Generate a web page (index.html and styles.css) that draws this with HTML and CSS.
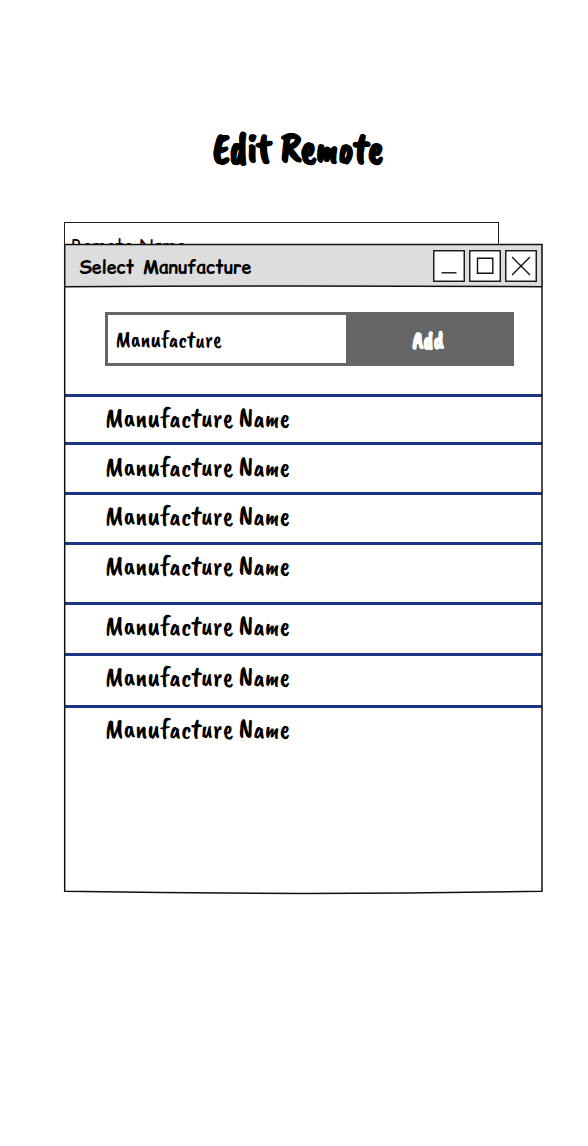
FILE: index.html
```
<!DOCTYPE html>
<html lang="en">
<head>
<meta charset="utf-8">
<title>Edit Remote</title>
<link rel="stylesheet" href="styles.css">
</head>
<body>
<main class="screen">
  <h1 class="title"><svg class="lettering" width="172" height="44"><text x="1" y="35.5" textLength="170.5" lengthAdjust="spacingAndGlyphs">Edit Remote</text></svg></h1>
  <div class="remote-field"><svg class="lettering" width="130" height="30"><text x="-1" y="20" textLength="115" lengthAdjust="spacingAndGlyphs">Remote Name</text></svg></div>
  <section class="window">
    <header class="titlebar">
      <svg class="lettering caption" width="180" height="30"><text x=".5" y="22.5" textLength="172" lengthAdjust="spacingAndGlyphs">Select Manufacture</text></svg>
      <div class="controls">
        <svg class="control" viewBox="0 0 32 32"><rect class="box" x=".75" y=".75" width="30.5" height="30.5"/><path d="M8.5 22.8H23.5"/></svg>
        <svg class="control" viewBox="0 0 32 32"><rect class="box" x=".75" y=".75" width="30.5" height="30.5"/><path d="M8.5 8.3H23.8V23.3H8.5Z"/></svg>
        <svg class="control" viewBox="0 0 32 32"><rect class="box" x=".75" y=".75" width="30.5" height="30.5"/><path d="M7 7L25 25M25 7L7 25"/></svg>
      </div>
    </header>
    <div class="form">
      <div class="input"><svg class="lettering" width="120" height="30"><text x="-.5" y="21" textLength="106" lengthAdjust="spacingAndGlyphs">Manufacture</text></svg></div>
      <div class="add"><svg class="lettering" width="32" height="30"><text x="0.5" y="21.5" textLength="31" lengthAdjust="spacingAndGlyphs">Add</text></svg></div>
    </div>
    <div class="list">
      <div class="row r1"><svg class="lettering" width="190" height="36"><text x="-1" y="26" textLength="185" lengthAdjust="spacingAndGlyphs">Manufacture Name</text></svg></div>
      <div class="row r2"><svg class="lettering" width="190" height="36"><text x="-1" y="26" textLength="185" lengthAdjust="spacingAndGlyphs">Manufacture Name</text></svg></div>
      <div class="row r3"><svg class="lettering" width="190" height="36"><text x="-1" y="26" textLength="185" lengthAdjust="spacingAndGlyphs">Manufacture Name</text></svg></div>
      <div class="row r4"><svg class="lettering" width="190" height="36"><text x="-1" y="26" textLength="185" lengthAdjust="spacingAndGlyphs">Manufacture Name</text></svg></div>
      <div class="row r5"><svg class="lettering" width="190" height="36"><text x="-1" y="26" textLength="185" lengthAdjust="spacingAndGlyphs">Manufacture Name</text></svg></div>
      <div class="row r6"><svg class="lettering" width="190" height="36"><text x="-1" y="26" textLength="185" lengthAdjust="spacingAndGlyphs">Manufacture Name</text></svg></div>
      <div class="row r7"><svg class="lettering" width="190" height="36"><text x="-1" y="26" textLength="185" lengthAdjust="spacingAndGlyphs">Manufacture Name</text></svg></div>
    </div>
    <svg class="frame" width="480" height="652" viewBox="0 0 480 652"><path d="M.7 .5H478V647.3Q239 651.5 .7 647.3Z"/><path d="M.7 42.8Q239 41 478 42.8"/></svg>
  </section>
</main>
</body>
</html>
```
FILE: styles.css
```
* { box-sizing: border-box; }
body { margin: 0; background: #fff; font-family: "Caveat Brush", Caveat, Lato, sans-serif; color: #000; }
.screen { height: 1146px; padding: 126px 0 0 64px; overflow: hidden; }
.lettering { display: block; flex: none; overflow: visible; fill: currentColor; }
.title { margin: 0; height: 96px; padding-left: 148px; font-size: 42px; font-weight: 700; }
.title .lettering { stroke: #000; stroke-width: .6; stroke-linejoin: round; }
.remote-field { width: 435px; height: 22px; padding: 10px 0 0 7px; border: 1.5px solid #222; border-bottom: 0; font-family: "Comic Sans MS", "Comic Relief", "Comic Neue", "Patrick Hand", Lato, sans-serif; font-size: 18px; }
.window { position: relative; width: 479px; height: 648px; background: #fff; }
.titlebar { display: flex; align-items: center; justify-content: space-between; height: 43px; padding: 0 6px 0 15px; background: #ddd; font-family: "Comic Sans MS", "Comic Relief", "Comic Neue", "Patrick Hand", Lato, sans-serif; font-size: 18.7px; font-weight: 700; word-spacing: 1px; }
.controls { display: flex; gap: 4px; }
.control { display: block; width: 32px; height: 32px; fill: none; stroke: #111; stroke-width: 1.4; }
.control .box { fill: #fff; }
.form { display: flex; width: 409px; height: 54px; margin: 25px 0 0 41px; background: #666; }
.input { width: 241px; padding: 11px 0 0 8px; border: 3px solid #666; border-right: 0; background: #fff; font-size: 23.5px; font-weight: 400; }
.add { flex: 1; padding: 14px 0 0 66px; color: #fff; font-size: 24px; font-weight: 700; }
.add .lettering { stroke: #fff; stroke-width: .4; }
.list { margin: 28px 1px 0; }
.row { padding: 4px 0 0 41px; border-top: 3px solid #1c3484; height: 48px; font-size: 28px; font-weight: 400; }
.r2 { height: 50px; padding-top: 5px; }
.r3 { height: 50px; }
.r4 { height: 60px; }
.r5 { height: 51px; }
.r6 { height: 52px; }
.r7 { height: 180px; }
.frame { position: absolute; left: 0; top: 0; overflow: visible; pointer-events: none; fill: none; stroke: #111; stroke-width: 1.5; }
```
